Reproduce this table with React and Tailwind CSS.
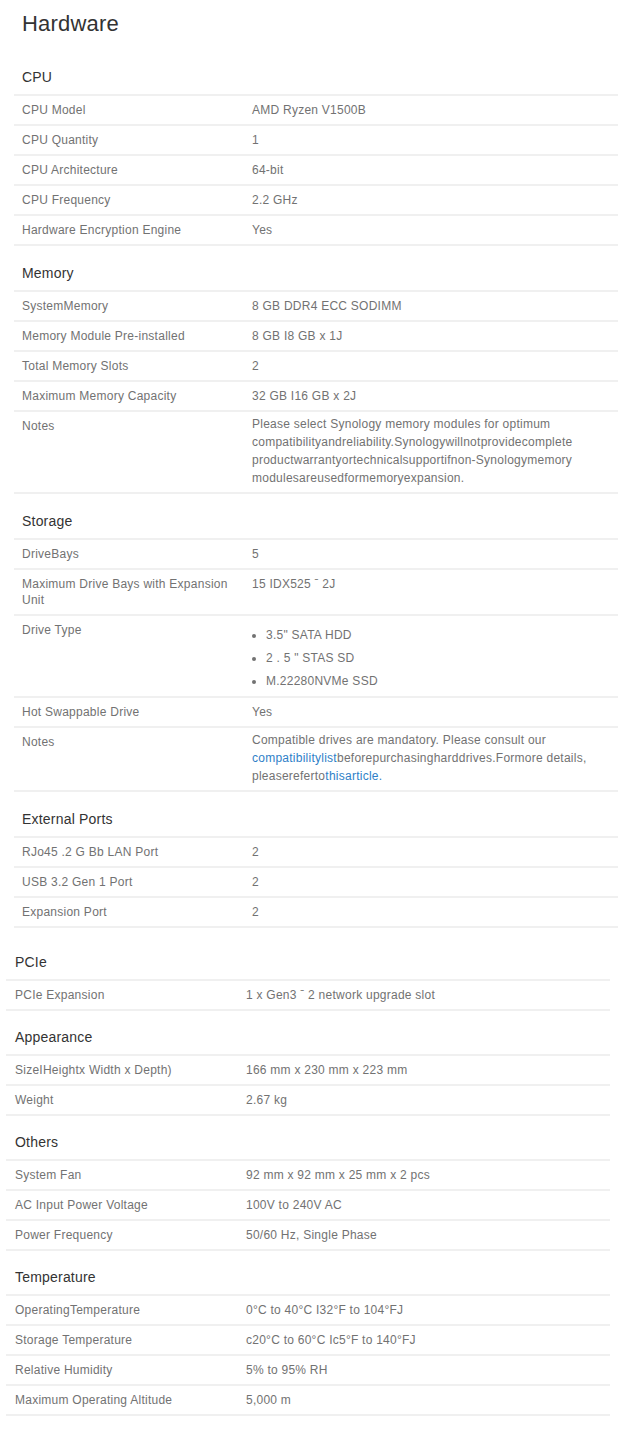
import React from 'react'

const groupOne = [
  {
    title: 'CPU',
    rows: [
      ['CPU Model', 'AMD Ryzen V1500B'],
      ['CPU Quantity', '1'],
      ['CPU Architecture', '64-bit'],
      ['CPU Frequency', '2.2 GHz'],
      ['Hardware Encryption Engine', 'Yes'],
    ],
  },
  {
    title: 'Memory',
    rows: [
      ['SystemMemory', '8 GB DDR4 ECC SODIMM'],
      ['Memory Module Pre-installed', '8 GB I8 GB x 1J'],
      ['Total Memory Slots', '2'],
      ['Maximum Memory Capacity', '32 GB I16 GB x 2J'],
      [
        'Notes',
        'Please select Synology memory modules for optimum compatibilityandreliability.Synologywillnotprovidecomplete productwarrantyortechnicalsupportifnon-Synologymemory modulesareusedformemoryexpansion.',
      ],
    ],
  },
  {
    title: 'Storage',
    rows: [
      ['DriveBays', '5'],
      ['Maximum Drive Bays with Expansion Unit', '15 IDX525 \u02c9 2J'],
      ['Drive Type', 'list'],
      ['Hot Swappable Drive', 'Yes'],
      ['Notes', 'storageNotes'],
    ],
  },
  {
    title: 'External Ports',
    rows: [
      ['RJ\u03bf45 .2 G  Bb LAN Port', '2'],
      ['USB 3.2 Gen 1 Port', '2'],
      ['Expansion Port', '2'],
    ],
  },
]

const groupTwo = [
  { title: 'PCIe', rows: [['PCIe Expansion', '1 x Gen3 \u02c9 2 network upgrade slot']] },
  {
    title: 'Appearance',
    rows: [
      ['SizeIHeightx Width x Depth)', '166 mm x 230 mm x 223 mm'],
      ['Weight', '2.67 kg'],
    ],
  },
  {
    title: 'Others',
    rows: [
      ['System Fan', '92 mm x 92 mm x 25 mm x 2 pcs'],
      ['AC Input Power Voltage', '100V to 240V AC'],
      ['Power Frequency', '50/60 Hz, Single Phase'],
    ],
  },
  {
    title: 'Temperature',
    rows: [
      ['OperatingTemperature', '0\u00b0C to 40\u00b0C I32\u00b0F to 104\u00b0FJ'],
      ['Storage Temperature', 'c20\u00b0C to 60\u00b0C Ic5\u00b0F to 140\u00b0FJ'],
      ['Relative Humidity', '5% to 95% RH'],
      ['Maximum Operating Altitude', '5,000 m'],
    ],
  },
]

function Value({ value }) {
  if (value === 'list') {
    return (
      <ul className="mt-[2px] -mb-[3px] list-disc pl-[14px] leading-[23px]">
        <li>3.5" SATA HDD</li>
        <li>2 . 5 " STAS SD</li>
        <li>M.22280NVMe SSD</li>
      </ul>
    )
  }
  if (value === 'storageNotes') {
    return (
      <p className="-mt-[3px] -mb-[1px] leading-[18px]">
        Compatible drives are mandatory. Please consult our{' '}
        <span className="text-[#2f7fc8]">compatibilitylist</span>beforepurchasingharddrives.Formore details,
        pleasereferto<span className="text-[#2f7fc8]">thisarticle.</span>
      </p>
    )
  }
  if (value.length > 60) {
    return <p className="-mt-[3px] -mb-[1px] leading-[18px]">{value}</p>
  }
  return <p className="leading-[16px]">{value}</p>
}

function Section({ section, labelWidth, pad, headHeight }) {
  return (
    <div>
      <div className={`flex items-end ${headHeight} ${pad} pb-[6px] text-[14px] tracking-[0.2px] text-[#333]`}>
        {section.title}
      </div>
      {section.rows.map(([label, value]) => (
        <div
          key={label + value}
          className={`flex border-t-2 border-[#f0f0f0] ${pad} py-[6px] text-[12px] tracking-[0.25px] text-[#727272]`}
        >
          <div className={`${labelWidth} shrink-0 pr-4 leading-[16px]`}>{label}</div>
          <div className="flex-1 pr-2">
            <Value value={value} />
          </div>
        </div>
      ))}
      <div className="border-t-2 border-[#f0f0f0]" />
    </div>
  )
}

export default function App() {
  return (
    <div className="min-h-[1429px] bg-white font-['Liberation_Sans',Arial,sans-serif]">
      <h1 className="px-[22px] pt-[10px] text-[22px] leading-[28px] tracking-[0.2px] text-[#333]">Hardware</h1>
      <div className="ml-[14px] mr-[23px] mt-[12px]">
        {groupOne.map((s) => (
          <Section key={s.title} section={s} labelWidth="w-[230px]" pad="px-[8px]" headHeight="h-[44px]" />
        ))}
      </div>
      <div className="ml-[6px] mr-[31px] mt-[8px]">
        {groupTwo.map((s) => (
          <Section key={s.title} section={s} labelWidth="w-[231px]" pad="px-[9px]" headHeight="h-[43px]" />
        ))}
      </div>
    </div>
  )
}
